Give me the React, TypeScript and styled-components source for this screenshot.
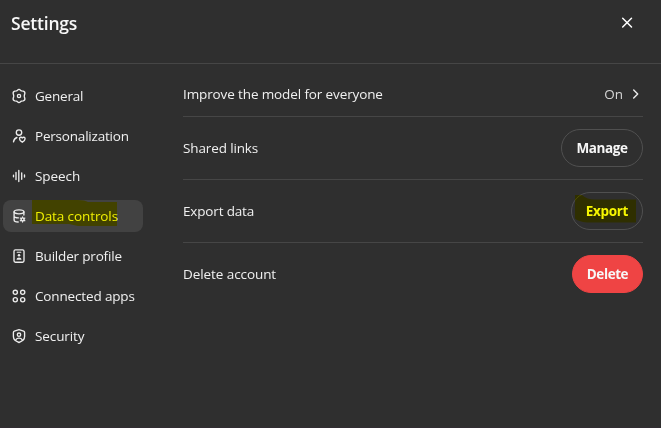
import React from "react";
import styled, { createGlobalStyle, css } from "styled-components";

const GlobalStyle = createGlobalStyle`
  *, *::before, *::after { box-sizing: border-box; }
  html, body { margin: 0; background: #2f2f2f; }
  body { font-family: "Open Sans", "Noto Sans", sans-serif; color: #f0f0f0; }
  button { font: inherit; color: inherit; background: none; border: 0; padding: 0; margin: 0; }
`;

const Dialog = styled.section`
  display: flex;
  flex-direction: column;
  width: 661px;
  height: 428px;
  overflow: hidden;
  background: #2f2f2f;
  border-bottom: 1px solid #322d33;
`;

const Header = styled.header`
  display: flex;
  align-items: center;
  justify-content: space-between;
  height: 64px;
  padding: 0 26px 17px 11px;
  border-bottom: 1px solid #464646;
`;

const Title = styled.h2`
  margin: 0;
  font-size: 17.5px;
  line-height: 24px;
  font-weight: 600;
  letter-spacing: -0.2px;
  color: #f8f8f8;
`;

const CloseButton = styled.button`
  display: flex;
  color: #ffffff;
`;

const Body = styled.div`
  display: flex;
  flex: 1;
`;

const Sidebar = styled.nav`
  display: flex;
  flex-direction: column;
  gap: 8px;
  width: 143px;
  padding: 16px 0 0 3px;
`;

const NavItem = styled.button<{ $active?: boolean }>`
  display: flex;
  align-items: center;
  gap: 8px;
  height: 32px;
  padding: 0 0 0 8px;
  border-radius: 8px;
  text-align: left;
  ${(p) => p.$active && css`background: #424242;`}
`;

const Label = styled.span<{ $track?: number; $strong?: boolean }>`
  position: relative;
  font-size: 13.5px;
  line-height: 20px;
  white-space: nowrap;
  font-weight: ${(p) => (p.$strong ? 700 : 400)};
  letter-spacing: ${(p) => p.$track ?? 0}px;
`;

const Marker = styled.svg<{ $left: number; $top: number }>`
  position: absolute;
  left: ${(p) => p.$left}px;
  top: ${(p) => p.$top}px;
  overflow: visible;
  fill: #ffff00;
  mix-blend-mode: multiply;
  pointer-events: none;
`;

const Main = styled.main`
  flex: 1;
  padding: 8px 18px 0 40px;
`;

const Row = styled.div`
  display: flex;
  align-items: center;
  justify-content: space-between;
  padding: 12px 0;
  border-bottom: 1px solid #464646;
  &:last-child { border-bottom: 0; }
`;

const Value = styled.button`
  display: flex;
  align-items: center;
  gap: 4px;
  height: 20px;
  color: #d6d6d6;
`;

const Pill = styled.button<{ $width: number; $danger?: boolean }>`
  display: flex;
  align-items: center;
  justify-content: center;
  width: ${(p) => p.$width}px;
  height: 38px;
  border-radius: 19px;
  border: 1px solid ${(p) => (p.$danger ? "#ef4444" : "#505050")};
  background: ${(p) => (p.$danger ? "#ef4444" : "transparent")};
  color: #f7f7f7;
`;

const Icon = styled.svg`
  display: block;
  flex: none;
  width: 16px;
  height: 16px;
  fill: none;
  stroke: #ececec;
  stroke-width: 1.35;
  stroke-linecap: round;
  stroke-linejoin: round;
`;

const GearIcon = () => (
  <Icon viewBox="0 0 16 16">
    <path d="M6.5 2.2Q8 .6 9.5 2.2L10.4 2.9L12.2 3.1Q14.3 3.7 13.8 5.8L13.4 7Q13.2 8 13.4 9L13.8 10.2Q14.3 12.3 12.2 12.9L10.4 13.1L9.5 13.8Q8 15.4 6.5 13.8L5.6 13.1L3.8 12.9Q1.7 12.3 2.2 10.2L2.6 9Q2.8 8 2.6 7L2.2 5.8Q1.7 3.7 3.8 3.1L5.6 2.9Z" />
    <circle cx="8" cy="8" r="1.6" />
  </Icon>
);

const PersonHeartIcon = () => (
  <Icon viewBox="0 0 16 16">
    <circle cx="8" cy="4.5" r="2.7" />
    <path d="M2.5 13.8C2.8 11.7 4 10.2 5.9 9.5" />
    <path d="M11.3 14.2C9.6 13.2 8.5 12 8.5 10.7C8.5 9.1 10.5 8.7 11.3 10C12.1 8.7 14.1 9.1 14.1 10.7C14.1 12 13 13.2 11.3 14.2Z" />
  </Icon>
);

const WaveIcon = () => (
  <Icon viewBox="0 0 16 16">
    <path d="M2.5 7.2V8.8M5 4.5V11.5M7.8 2.5V13.5M10.7 4.8V11.2M13.5 7V9" />
  </Icon>
);

const DatabaseIcon = () => (
  <Icon viewBox="0 0 16 16">
    <ellipse cx="8" cy="3.8" rx="4.9" ry="2" />
    <path d="M3.1 3.8V12C3.1 13.1 4.9 14 7.2 14M3.1 8C3.1 9.1 5 10 7.5 9.9M12.9 3.8V7" />
    <circle cx="11.6" cy="11.4" r="1.5" />
    <path strokeWidth="1.1" d="M11.6 8.7V9.8M11.6 13V14.1M9.3 10L10.2 10.6M13 12.2L13.9 12.8M9.3 12.8L10.2 12.2M13 10.6L13.9 10" />
  </Icon>
);

const ProfileIcon = () => (
  <Icon viewBox="0 0 16 16">
    <rect x="3" y="1.8" width="10" height="12.4" rx="1.4" />
    <path strokeWidth="1.1" d="M6.2 4.2H9.8" />
    <circle cx="8" cy="7.3" r="1.25" fill="#ececec" stroke="none" />
    <path d="M5.5 11.8C5.7 8.8 10.3 8.8 10.5 11.8Z" fill="#ececec" stroke="none" />
  </Icon>
);

const AppsIcon = () => (
  <Icon viewBox="0 0 16 16">
    <circle cx="4.3" cy="4.3" r="2.1" />
    <circle cx="11.7" cy="4.3" r="2.1" />
    <circle cx="4.3" cy="11.7" r="2.1" />
    <circle cx="11.7" cy="11.7" r="2.1" />
  </Icon>
);

const ShieldIcon = () => (
  <Icon viewBox="0 0 16 16">
    <path d="M8 1.6L12.6 3.1Q13.6 3.5 13.6 4.5V8.6C13.6 11.6 11.3 13.4 8 14.5C4.7 13.4 2.4 11.6 2.4 8.6V4.5Q2.4 3.5 3.4 3.1Z" />
    <circle cx="8" cy="6.7" r="1.7" />
    <path d="M4.9 11.7C6 9.6 10 9.6 11.1 11.7" />
  </Icon>
);

const CloseIcon = () => (
  <Icon viewBox="0 0 16 16">
    <path d="M3.7 3.2L12.5 12M12.5 3.2L3.7 12" stroke="#fff" strokeWidth="1.5" />
  </Icon>
);

const ChevronIcon = () => (
  <Icon viewBox="0 0 16 16">
    <path d="M6.7 3.9L10.7 8L6.7 12.1" strokeWidth="1.4" />
  </Icon>
);

const navItems = [
  { label: "General", icon: GearIcon, track: -0.22 },
  { label: "Personalization", icon: PersonHeartIcon, track: -0.2 },
  { label: "Speech", icon: WaveIcon, track: -0.06 },
  { label: "Data controls", icon: DatabaseIcon, track: -0.1, active: true },
  { label: "Builder profile", icon: ProfileIcon, track: -0.18 },
  { label: "Connected apps", icon: AppsIcon, track: -0.15 },
  { label: "Security", icon: ShieldIcon, track: -0.1 },
];

export default function App() {
  return (
    <>
      <GlobalStyle />
      <Dialog>
        <Header>
          <Title>Settings</Title>
          <CloseButton aria-label="Close"><CloseIcon /></CloseButton>
        </Header>
        <Body>
          <Sidebar>
            {navItems.map(({ label, icon: ItemIcon, track, active }) => (
              <NavItem key={label} $active={active}>
                <ItemIcon />
                <Label $track={track}>
                  {label}
                  {active && (
                    <Marker $left={-3} $top={-6} width="85" height="26">
                      <path d="M0 0H46Q53 0 56 2H85V26H46L37 24H0Z" />
                    </Marker>
                  )}
                </Label>
              </NavItem>
            ))}
          </Sidebar>
          <Main>
            <Row>
              <Label $track={-0.12}>Improve the model for everyone</Label>
              <Value><Label>On</Label><ChevronIcon /></Value>
            </Row>
            <Row>
              <Label $track={-0.13}>Shared links</Label>
              <Pill $width={82}><Label $strong $track={-0.4}>Manage</Label></Pill>
            </Row>
            <Row>
              <Label $track={-0.16}>Export data</Label>
              <Pill $width={72}>
                <Label $strong $track={-0.33}>
                  Export
                  <Marker $left={-11} $top={-6} width="61" height="28">
                    <path d="M0 0H7Q12 4.5 20 4.5H61V27.5H12Q3 26.5 0 23.5Z" />
                  </Marker>
                </Label>
              </Pill>
            </Row>
            <Row>
              <Label $track={-0.08}>Delete account</Label>
              <Pill $width={71} $danger><Label $strong $track={-0.42}>Delete</Label></Pill>
            </Row>
          </Main>
        </Body>
      </Dialog>
    </>
  );
}
